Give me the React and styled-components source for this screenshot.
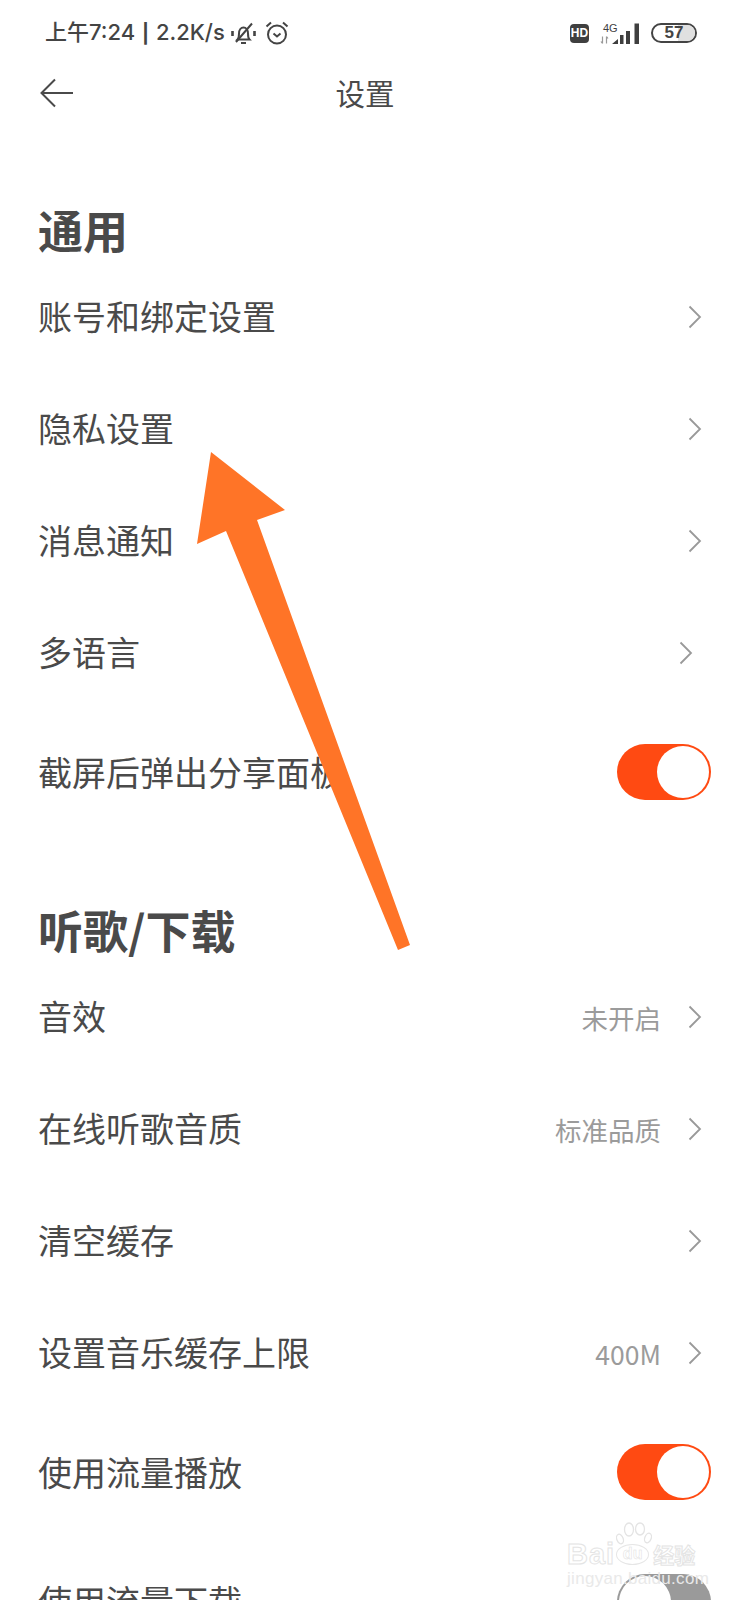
import React from 'react';
import styled, { createGlobalStyle } from 'styled-components';

const GlobalStyle = createGlobalStyle`
	html, body {
		margin: 0;
		padding: 0;
		background: #fff;
	}
	body {
		font-family: "Noto Sans CJK SC", "Noto Sans", sans-serif;
		color: #4a4a4a;
	}
`;

const Page = styled.div`
	position: relative;
	width: 738px;
	height: 1600px;
	overflow: hidden;
	background: #fff;
`;

const StatusBar = styled.div`
	height: 66px;
	padding: 0 41px 0 45px;
	box-sizing: border-box;
	display: flex;
	align-items: center;
	justify-content: space-between;
`;

const StatusLeft = styled.div`
	display: flex;
	align-items: center;
	gap: 9px;
`;

const StatusRight = styled.div`
	display: flex;
	align-items: center;
	gap: 11px;
`;

const StatusText = styled.span`
	font-family: "Inter", "Noto Sans CJK SC", sans-serif;
	font-size: 22px;
	font-weight: 500;
	line-height: 26px;
	white-space: nowrap;
	color: #444;
	margin-right: -3px;
`;

const StatusDivider = styled.span`
	font-size: 19px;
	font-weight: 700;
	margin: 0 1px;
`;

const HdBadge = styled.span`
	width: 19px;
	height: 19px;
	border-radius: 4px;
	background: #3f3f3f;
	color: #fff;
	font-family: "Liberation Sans", sans-serif;
	font-size: 12px;
	font-weight: 700;
	display: flex;
	align-items: center;
	justify-content: center;
`;

const Battery = styled.span`
	position: relative;
	width: 46px;
	height: 20px;
	box-sizing: border-box;
	border: 2px solid #444;
	border-radius: 10px;
	overflow: hidden;
	display: flex;
	align-items: center;
	justify-content: center;
	font-family: "Liberation Sans", sans-serif;
	font-size: 17px;
	font-weight: 700;
	color: #444;
	&::before {
		content: '';
		position: absolute;
		top: 0;
		bottom: 0;
		right: 0;
		width: 17px;
		background: #e0e0e0;
	}
	span {
		position: relative;
	}
`;

const NavBar = styled.div`
	position: relative;
	height: 58px;
	display: flex;
	align-items: center;
	justify-content: center;
	margin-bottom: 79px;
`;

const BackButton = styled.svg`
	position: absolute;
	left: 40px;
	top: 12px;
`;

const Title = styled.h1`
	margin: 0;
	font-size: 29.5px;
	font-weight: 400;
	line-height: 40px;
	color: #4a4a4a;
	transform: translate(-4px, -3px);
`;

const SectionTitle = styled.h2`
	margin: ${(p) => p.$top || 0}px 0 0;
	padding: 0 0 0 38px;
	height: 58px;
	box-sizing: border-box;
	line-height: 54px;
	font-size: 45px;
	font-weight: 700;
	color: #4a4a4a;
`;

const Row = styled.div`
	height: ${(p) => p.$height}px;
	padding: 0 ${(p) => p.$right}px 0 38px;
	box-sizing: border-box;
	display: flex;
	align-items: center;
	justify-content: space-between;
`;

const Label = styled.span`
	font-size: 34px;
	line-height: 44px;
	padding-bottom: ${(p) => p.$lift}px;
	color: #4a4a4a;
	white-space: nowrap;
`;

const Trailing = styled.div`
	display: flex;
	align-items: center;
	gap: 27px;
`;

const Value = styled.span`
	font-size: 26.5px;
	color: #9b9b9b;
`;

const Toggle = styled.div`
	width: 94px;
	height: 56px;
	border-radius: 28px;
	box-sizing: border-box;
	background: ${(p) => (p.$on ? '#ff4a12' : '#9a9a9a')};
	display: flex;
	align-items: center;
	justify-content: ${(p) => (p.$on ? 'flex-end' : 'flex-start')};
	padding: 2px;
	flex-shrink: 0;
	&::after {
		content: '';
		width: 52px;
		height: 52px;
		border-radius: 50%;
		background: #fff;
	}
`;

const Arrow = styled.svg`
	position: absolute;
	left: 0;
	top: 0;
	pointer-events: none;
`;

const Watermark = styled.div`
	position: absolute;
	left: 567px;
	top: 1522px;
	width: 132px;
	pointer-events: none;
	font-family: "Liberation Sans", sans-serif;
`;

const WatermarkPaw = styled.svg`
	position: absolute;
	left: 49px;
	top: 0;
`;

const WatermarkName = styled.div`
	display: flex;
	align-items: center;
	margin-top: 20px;
	height: 24px;
	color: #fff;
	-webkit-text-stroke: 1px #e4e4e4;
`;

const WatermarkLatin = styled.span`
	font-size: 29px;
	font-weight: 700;
	line-height: 24px;
	letter-spacing: 1px;
`;

const WatermarkDu = styled.span`
	width: 33px;
	height: 21px;
	margin: 0 4px 0 1px;
	border: 1.5px solid #e6e6e6;
	border-radius: 50%;
	box-sizing: border-box;
	display: flex;
	align-items: center;
	justify-content: center;
	font-size: 16px;
	font-weight: 700;
	line-height: 16px;
	-webkit-text-stroke: 0.5px #e0e0e0;
`;

const WatermarkCn = styled.span`
	font-family: "Noto Sans CJK SC", sans-serif;
	font-size: 21px;
	font-weight: 700;
	line-height: 24px;
`;

const WatermarkUrl = styled.div`
	margin-top: 3px;
	font-size: 17px;
	line-height: 20px;
	letter-spacing: 0.3px;
	white-space: nowrap;
	color: #e9e9e9;
`;

const Chevron = () => (
	<svg width="14" height="24" viewBox="0 0 14 24" fill="none">
		<path d="M1.5 1.5 12 12 1.5 22.5" stroke="#999" strokeWidth="1.8" />
	</svg>
);

const MuteIcon = () => (
	<svg width="25" height="23" viewBox="0 0 25 23" fill="none" stroke="#444" strokeWidth="2">
		<path d="M6.500 17.500c1.500-1.500 1.500-3.500 1.500-6 0-3.500 2-6 4.500-6s4.500 2.500 4.500 6c0 2.500 0 4.500 1.500 6z" />
		<path d="M10 21h5M5 20 21 1.500" />
		<path d="M1.500 9v5M23.500 9v5" strokeWidth="2.600" />
	</svg>
);

const AlarmIcon = () => (
	<svg width="24" height="24" viewBox="0 0 24 24" fill="none" stroke="#444" strokeWidth="2">
		<circle cx="12" cy="13.500" r="9" />
		<path d="M8.500 12.500 12 15.500l3.500-3M1.500 5.500 6 1.500M22.500 5.500 18 1.500" />
	</svg>
);

const SignalIcon = () => (
	<svg width="40" height="21" viewBox="0 0 40 21" fill="#3f3f3f">
		<text x="3" y="8.500" fontFamily="Liberation Sans" fontSize="11" fontWeight="400">4G</text>
		<path d="M2.500 13.500v7M1 18.500l1.500 2M6.500 20.500v-7M6.500 13.500l1.500 2" stroke="#999" strokeWidth="1.200" fill="none" />
		<path d="M12 21l6-5v5zM20 12h3.500v9H20zM26 8h4v13h-4zM34.500 0.500H39V21h-4.500z" />
	</svg>
);

const general = [
	{ label: '账号和绑定设置' },
	{ label: '隐私设置' },
	{ label: '消息通知' },
	{ label: '多语言', right: 45 },
	{ label: '截屏后弹出分享面板', toggle: 'on', lift: 0 },
];

const music = [
	{ label: '音效', value: '未开启' },
	{ label: '在线听歌音质', value: '标准品质' },
	{ label: '清空缓存' },
	{ label: '设置音乐缓存上限', value: '400M' },
	{ label: '使用流量播放', toggle: 'on', lift: 0 },
	{ label: '使用流量下载', toggle: 'off', height: 134 },
];

const SettingRow = ({ label, value, toggle, right = 36, height, lift = 3 }) => (
	<Row $height={height || (toggle ? 126 : 112)} $right={toggle ? 27 : right}>
		<Label $lift={lift}>{label}</Label>
		{toggle ? (
			<Toggle $on={toggle === 'on'} />
		) : (
			<Trailing>
				{value && <Value>{value}</Value>}
				<Chevron />
			</Trailing>
		)}
	</Row>
);

const App = () => {
	return (
		<Page>
			<GlobalStyle />
			<StatusBar>
				<StatusLeft>
					<StatusText>
						上午7:24 <StatusDivider>|</StatusDivider> 2.2K/s
					</StatusText>
					<MuteIcon />
					<AlarmIcon />
				</StatusLeft>
				<StatusRight>
					<HdBadge>HD</HdBadge>
					<SignalIcon />
					<Battery>
						<span>57</span>
					</Battery>
				</StatusRight>
			</StatusBar>
			<NavBar>
				<BackButton width="34" height="30" viewBox="0 0 34 30" fill="none">
					<path d="M33 15H2M15 1.500 1.500 15 15 28.500" stroke="#4a4a4a" strokeWidth="2" />
				</BackButton>
				<Title>设置</Title>
			</NavBar>
			<SectionTitle>通用</SectionTitle>
			{general.map((item) => (
				<SettingRow key={item.label} {...item} />
			))}
			<SectionTitle $top={68}>听歌/下载</SectionTitle>
			{music.map((item) => (
				<SettingRow key={item.label} {...item} />
			))}
			<Arrow width="738" height="1600" viewBox="0 0 738 1600">
				<polygon points="211,452 285,510 257,520 410,945 398,950 226,531 197,544" fill="#ff7427" />
			</Arrow>
			<Watermark>
				<WatermarkPaw width="36" height="24" viewBox="0 0 36 24" fill="#fff" stroke="#e4e4e4" strokeWidth="1.300">
					<ellipse cx="4" cy="17" rx="3.200" ry="5" transform="rotate(-20 4 17)" />
					<ellipse cx="13" cy="7.500" rx="4.500" ry="6.500" />
					<ellipse cx="24" cy="7" rx="4.500" ry="6" />
					<ellipse cx="32" cy="16" rx="3.200" ry="5" transform="rotate(20 32 16)" />
				</WatermarkPaw>
				<WatermarkName>
					<WatermarkLatin>Bai</WatermarkLatin>
					<WatermarkDu>du</WatermarkDu>
					<WatermarkCn>经验</WatermarkCn>
				</WatermarkName>
				<WatermarkUrl>jingyan.baidu.com</WatermarkUrl>
			</Watermark>
		</Page>
	);
};

export default App;
